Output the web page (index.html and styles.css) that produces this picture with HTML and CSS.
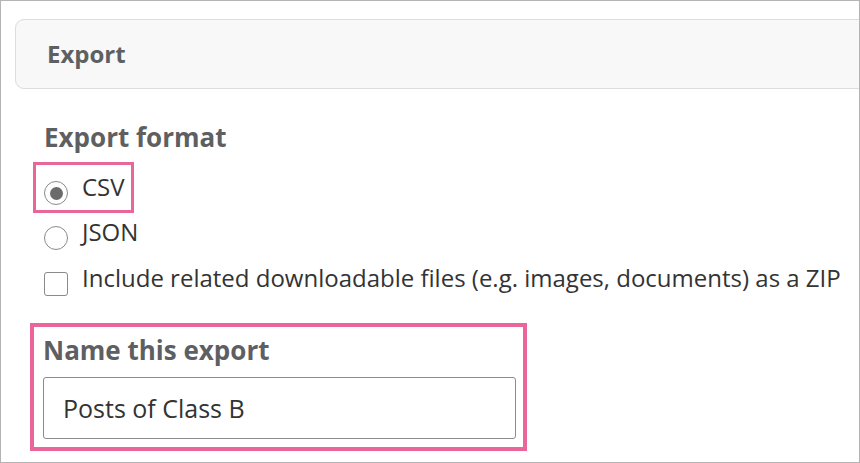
FILE: index.html
```html
<!DOCTYPE html>
<html>
<head>
<meta charset="utf-8">
<link rel="stylesheet" href="styles.css">
</head>
<body>
<div class="frame">
  <div class="panel-head"><span class="panel-title">Export</span></div>
  <div class="content">
    <div class="group-label">Export format</div>
    <div class="option highlight-inline">
      <span class="radio checked"></span><span class="opt-text">CSV</span>
    </div>
    <div class="option row-json">
      <span class="radio"></span><span class="opt-text">JSON</span>
    </div>
    <div class="option row-zip">
      <span class="checkbox"></span><span class="opt-text">Include related downloadable files (e.g. images, documents) as a ZIP</span>
    </div>
    <div class="name-box">
      <div class="group-label in-box">Name this export</div>
      <div class="text-input">Posts of Class B</div>
    </div>
  </div>
</div>
</body>
</html>
```

FILE: styles.css
```css
html, body {
  margin: 0;
  padding: 0;
  background: #fff;
}
body {
  width: 860px;
  height: 463px;
  font-family: "Open Sans", "Noto Sans", sans-serif;
}
.frame {
  box-sizing: border-box;
  width: 860px;
  height: 463px;
  border: 1px solid #b4b4b4;
  overflow: hidden;
  padding-top: 18px;
}
.panel-head {
  box-sizing: border-box;
  margin-left: 14px;
  margin-right: -40px;
  height: 70px;
  background: #f8f8f8;
  border: 1px solid #dcdcdc;
  border-radius: 9px;
  display: flex;
  align-items: center;
  padding-left: 31px;
  padding-bottom: 2px;
}
.panel-title {
  font-size: 24px;
  font-weight: 700;
  color: #5e5f62;
}
.content {
  padding-top: 31px;
  display: flex;
  flex-direction: column;
  align-items: flex-start;
}
.group-label {
  font-size: 26px;
  font-weight: 700;
  color: #5e5f62;
  line-height: 34px;
  margin-left: 43px;
  white-space: nowrap;
}
.option {
  display: flex;
  align-items: flex-start;
  margin-left: 43px;
}
.highlight-inline {
  box-sizing: border-box;
  margin-left: 32px;
  margin-top: 8px;
  height: 51px;
  padding: 6px 6px 7px 8px;
  border: 3px solid #e9659a;
}
.row-json {
  margin-top: 3px;
}
.row-zip {
  margin-top: 12px;
}
.radio {
  box-sizing: border-box;
  width: 24px;
  height: 24px;
  margin-top: 10px;
  border: 1px solid #8a8a8a;
  border-radius: 50%;
  display: flex;
  align-items: center;
  justify-content: center;
  background: #fff;
  flex: none;
}
.radio.checked::after {
  content: "";
  width: 13px;
  height: 13px;
  border-radius: 50%;
  background: #6b6b6b;
}
.checkbox {
  box-sizing: border-box;
  width: 24px;
  height: 24px;
  margin-top: 10px;
  border: 1px solid #8a8a8a;
  border-radius: 3px;
  background: #fff;
  flex: none;
}
.opt-text {
  margin-left: 14px;
  font-size: 24px;
  color: #333;
  line-height: 32px;
  white-space: nowrap;
}
.name-box {
  box-sizing: border-box;
  margin-top: 27px;
  margin-left: 29px;
  width: 497px;
  height: 128px;
  border: 4px solid #e9659a;
  padding: 6px 7px 8px 9px;
}
.group-label.in-box {
  margin-left: 0;
}
.text-input {
  box-sizing: border-box;
  margin-top: 10px;
  height: 62px;
  border: 1px solid #8a8a8a;
  border-radius: 3px;
  padding-left: 19px;
  display: flex;
  align-items: center;
  font-size: 25px;
  color: #333;
}
```
